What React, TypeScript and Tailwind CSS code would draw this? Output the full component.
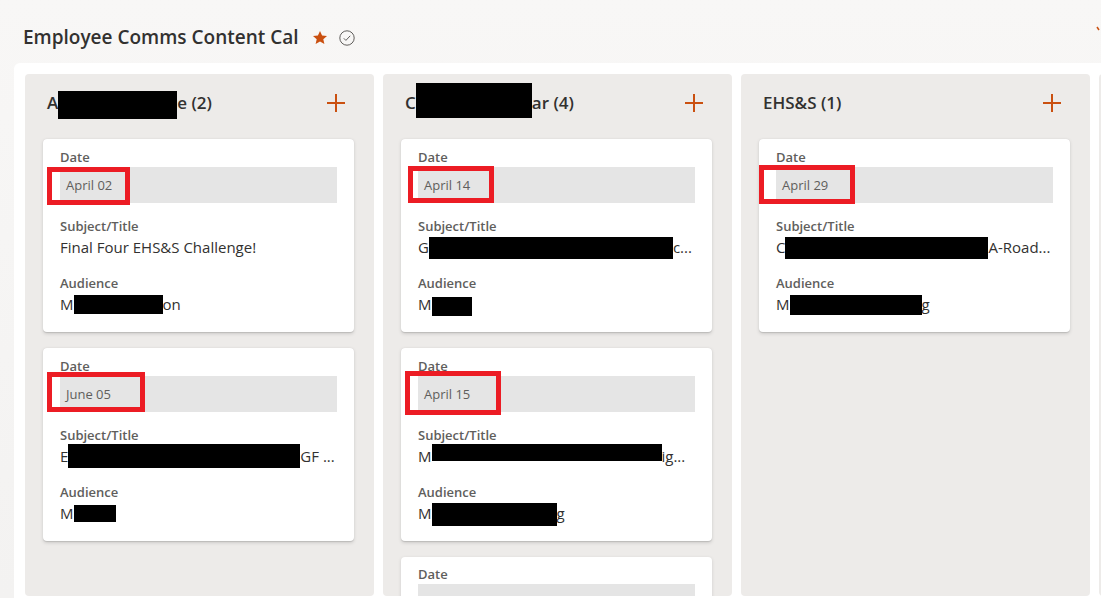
import React from "react";

type Card = {
  date: string;
  subject: React.ReactNode;
  audience: React.ReactNode;
  red: string; // classes for the annotation box
};

const Redact = ({ w, h, dy = 0 }: { w: string; h: string; dy?: number }) => (
  <span
    className={`inline-block bg-black align-middle -my-[6px] ${w} ${h}`}
    style={{ transform: `translateY(${dy}px)` }}
  />
);

const Plus = () => (
  <svg width="20" height="20" viewBox="0 0 20 20" className="shrink-0">
    <path d="M10 1v18M1 10h18" stroke="#ca5010" strokeWidth="2" fill="none" />
  </svg>
);

const CardView = ({ c }: { c: Card }) => (
  <div className="relative w-[311px] bg-white rounded-[4px] shadow-[0_1.6px_3.6px_rgba(0,0,0,0.13),0_0.3px_0.9px_rgba(0,0,0,0.11)] px-[17px] pt-[9px] pb-[16px]">
    <div className="h-[18px] text-[13px] leading-[18px] font-semibold text-[#605e5c]">Date</div>
    <div className="mt-[1px] h-[36px] bg-[#e5e5e5] flex items-center pl-[6px] pt-[2px] text-[13px] text-[#605e5c]">
      {c.date}
    </div>
    <div className="mt-[14px] h-[18px] text-[13px] leading-[18px] font-semibold text-[#605e5c]">Subject/Title</div>
    <div className="h-[24px] text-[15px] leading-[24px] text-[#323130] whitespace-nowrap overflow-hidden">{c.subject}</div>
    <div className="mt-[15px] h-[18px] text-[13px] leading-[18px] font-semibold text-[#605e5c]">Audience</div>
    <div className="h-[24px] text-[15px] leading-[24px] text-[#323130] whitespace-nowrap">{c.audience}</div>
    <div className={`absolute border-[5px] border-[#ec1c24] ${c.red}`} />
  </div>
);

const Column = ({
  title,
  cards,
  extra,
}: {
  title: React.ReactNode;
  cards: Card[];
  extra?: boolean;
}) => (
  <div className="w-[349px] h-[522px] shrink-0 bg-[#edebe9] rounded-[4px] overflow-hidden">
    <div className="flex items-center justify-between pl-[22px] pr-[28px] pt-[17px] pb-[24px] h-[65px]">
      <div className="h-[24px] text-[17px] leading-[24px] font-semibold text-[#323130] whitespace-nowrap">{title}</div>
      <Plus />
    </div>
    <div className="flex flex-col gap-[16px] pl-[18px]">
      {cards.map((c, i) => (
        <CardView key={i} c={c} />
      ))}
      {extra && (
        <div className="w-[311px] bg-white rounded-[4px] shadow-[0_1.6px_3.6px_rgba(0,0,0,0.13)] px-[17px] pt-[8px] pb-[16px]">
          <div className="h-[18px] text-[13px] leading-[18px] font-semibold text-[#605e5c]">Date</div>
          <div className="mt-[1px] h-[36px] bg-[#e5e5e5]" />
        </div>
      )}
    </div>
  </div>
);

export default function App() {
  const col1: Card[] = [
    {
      date: "April 02",
      subject: "Final Four EHS&S Challenge!",
      audience: (
        <>
          M<Redact w="w-[89px]" h="h-[19px]" dy={-1} />on
        </>
      ),
      red: "left-[4px] top-[28px] w-[83px] h-[38px]",
    },
    {
      date: "June 05",
      subject: (
        <>
          E<Redact w="w-[232px]" h="h-[25px]" dy={-1} />GF ...
        </>
      ),
      audience: (
        <>
          M<Redact w="w-[42px]" h="h-[17px]" dy={-1} />
        </>
      ),
      red: "left-[4px] top-[24px] w-[98px] h-[40px]",
    },
  ];
  const col2: Card[] = [
    {
      date: "April 14",
      subject: (
        <>
          G<Redact w="w-[244px]" h="h-[23px]" />c...
        </>
      ),
      audience: (
        <>
          M<Redact w="w-[40px]" h="h-[19px]" dy={1} />
        </>
      ),
      red: "left-[7px] top-[27px] w-[86px] h-[37px]",
    },
    {
      date: "April 15",
      subject: (
        <>
          M<Redact w="w-[230px]" h="h-[17px]" dy={-5} />ig...
        </>
      ),
      audience: (
        <>
          M<Redact w="w-[125px]" h="h-[23px]" />g
        </>
      ),
      red: "left-[4px] top-[23px] w-[96px] h-[44px]",
    },
  ];
  const col3: Card[] = [
    {
      date: "April 29",
      subject: (
        <>
          C<Redact w="w-[203px]" h="h-[23px]" />A-Road...
        </>
      ),
      audience: (
        <>
          M<Redact w="w-[132px]" h="h-[20px]" dy={-1} />g
        </>
      ),
      red: "left-[0px] top-[26px] w-[96px] h-[39px]",
    },
  ];

  return (
    <div className="relative w-[1101px] h-[598px] overflow-hidden bg-gradient-to-b from-[#f8f7f6] to-[#f3f2f1] font-['Segoe_UI','Open_Sans',sans-serif]">
      <div className="h-[63px] pt-[22px] pl-[23px] flex items-start gap-[13px]">
        <div className="text-[19px] leading-[30px] font-semibold text-[#323130] whitespace-nowrap">
          Employee Comms Content Cal
        </div>
        <div className="flex items-center gap-[11px] h-[30px] pt-[1px]">
          <svg width="16" height="16" viewBox="0 0 16 16">
            <path
              d="M8 1l2.1 4.5 4.9.5-3.7 3.3 1.1 4.8L8 11.6 3.6 14.1l1.1-4.8L1 6l4.9-.5z"
              fill="#ca5010"
            />
          </svg>
          <svg width="16" height="16" viewBox="0 0 16 16">
            <circle cx="8" cy="8" r="7.2" stroke="#605e5c" strokeWidth="1" fill="none" />
            <path d="M4.8 8.3l2.1 2.1 4.3-4.6" stroke="#605e5c" strokeWidth="1" fill="none" />
          </svg>
        </div>
      </div>
      <svg className="absolute left-[1096px] top-[25px]" width="10" height="10" viewBox="0 0 10 10">
        <path d="M1 2l2 3" stroke="#ca5010" strokeWidth="1.5" fill="none" />
      </svg>
      <div className="ml-[14px] bg-white rounded-tl-[6px] pt-[11px] pl-[11px] h-[600px] flex gap-[9px]">
        <Column
          title={
            <>
              A<Redact w="w-[119px]" h="h-[28px]" dy={1} />e (2)
            </>
          }
          cards={col1}
        />
        <Column
          title={
            <>
              C<Redact w="w-[116px]" h="h-[35px]" dy={-4} />ar (4)
            </>
          }
          cards={col2}
          extra
        />
        <Column title="EHS&S (1)" cards={col3} />
        <Column title="" cards={[]} />
      </div>
    </div>
  );
}
